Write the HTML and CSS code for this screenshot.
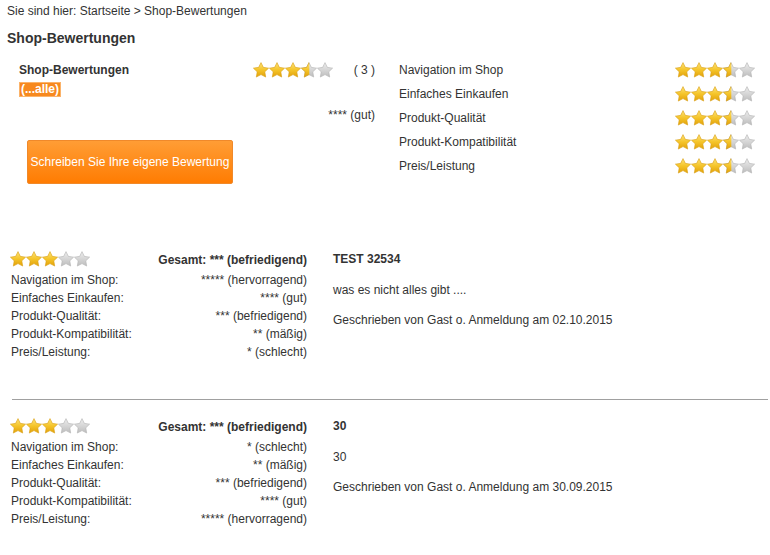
FILE: index.html
```html
<!DOCTYPE html>
<html lang="de">
<head>
<meta charset="utf-8">
<title>Shop-Bewertungen</title>
<link rel="stylesheet" href="styles.css">
</head>
<body>
<svg class="defs" width="0" height="0" aria-hidden="true">
  <defs>
    <linearGradient id="gold" x1="0" y1="0" x2="0" y2="1">
      <stop offset="0" stop-color="#fde37a"/>
      <stop offset="0.5" stop-color="#f5c52a"/>
      <stop offset="1" stop-color="#e2a10a"/>
    </linearGradient>
    <linearGradient id="grey" x1="0" y1="0" x2="0" y2="1">
      <stop offset="0" stop-color="#eeeeee"/>
      <stop offset="1" stop-color="#bdbdbd"/>
    </linearGradient>
    <clipPath id="halfclip"><rect x="0" y="0" width="8.3" height="16"/></clipPath>
    <path id="sp" d="M8 0.6 L10.35 5.36 L15.6 6.13 L11.8 9.84 L12.7 15.07 L8 12.6 L3.3 15.07 L4.2 9.84 L0.4 6.13 L5.65 5.36 Z"/>
    <symbol id="s-on" viewBox="0 0 16 16"><use href="#sp" fill="url(#gold)" stroke="#d9a015" stroke-width="0.6" stroke-linejoin="round"/></symbol>
    <symbol id="s-off" viewBox="0 0 16 16"><use href="#sp" fill="url(#grey)" stroke="#b3b3b3" stroke-width="0.6" stroke-linejoin="round"/></symbol>
    <symbol id="s-half" viewBox="0 0 16 16"><use href="#sp" fill="url(#grey)" stroke="#b3b3b3" stroke-width="0.6" stroke-linejoin="round"/><use href="#sp" clip-path="url(#halfclip)" fill="url(#gold)" stroke="#d9a015" stroke-width="0.6" stroke-linejoin="round"/></symbol>
  </defs>
</svg>

<div class="page">
  <div class="breadcrumb">Sie sind hier: Startseite &gt; Shop-Bewertungen</div>
  <h1 class="title">Shop-Bewertungen</h1>

  <div class="summary">
    <div class="sum-left">
      <div class="sum-head">
        <span class="sum-name">Shop-Bewertungen</span>
        <span class="stars"><svg class="star" viewBox="0 0 16 16"><use href="#s-on"/></svg><svg class="star" viewBox="0 0 16 16"><use href="#s-on"/></svg><svg class="star" viewBox="0 0 16 16"><use href="#s-on"/></svg><svg class="star" viewBox="0 0 16 16"><use href="#s-half"/></svg><svg class="star" viewBox="0 0 16 16"><use href="#s-off"/></svg></span>
        <span class="sum-count">( 3 )</span>
      </div>
      <div><span class="badge">(...alle)</span></div>
      <div class="sum-grade">**** (gut)</div>
      <div><span class="btn">Schreiben Sie Ihre eigene Bewertung</span></div>
    </div>
    <div class="sum-right">
      <div class="crit"><span>Navigation im Shop</span><span class="stars"><svg class="star" viewBox="0 0 16 16"><use href="#s-on"/></svg><svg class="star" viewBox="0 0 16 16"><use href="#s-on"/></svg><svg class="star" viewBox="0 0 16 16"><use href="#s-on"/></svg><svg class="star" viewBox="0 0 16 16"><use href="#s-half"/></svg><svg class="star" viewBox="0 0 16 16"><use href="#s-off"/></svg></span></div>
      <div class="crit"><span>Einfaches Einkaufen</span><span class="stars"><svg class="star" viewBox="0 0 16 16"><use href="#s-on"/></svg><svg class="star" viewBox="0 0 16 16"><use href="#s-on"/></svg><svg class="star" viewBox="0 0 16 16"><use href="#s-on"/></svg><svg class="star" viewBox="0 0 16 16"><use href="#s-half"/></svg><svg class="star" viewBox="0 0 16 16"><use href="#s-off"/></svg></span></div>
      <div class="crit"><span>Produkt-Qualität</span><span class="stars"><svg class="star" viewBox="0 0 16 16"><use href="#s-on"/></svg><svg class="star" viewBox="0 0 16 16"><use href="#s-on"/></svg><svg class="star" viewBox="0 0 16 16"><use href="#s-on"/></svg><svg class="star" viewBox="0 0 16 16"><use href="#s-half"/></svg><svg class="star" viewBox="0 0 16 16"><use href="#s-off"/></svg></span></div>
      <div class="crit"><span>Produkt-Kompatibilität</span><span class="stars"><svg class="star" viewBox="0 0 16 16"><use href="#s-on"/></svg><svg class="star" viewBox="0 0 16 16"><use href="#s-on"/></svg><svg class="star" viewBox="0 0 16 16"><use href="#s-on"/></svg><svg class="star" viewBox="0 0 16 16"><use href="#s-half"/></svg><svg class="star" viewBox="0 0 16 16"><use href="#s-off"/></svg></span></div>
      <div class="crit"><span>Preis/Leistung</span><span class="stars"><svg class="star" viewBox="0 0 16 16"><use href="#s-on"/></svg><svg class="star" viewBox="0 0 16 16"><use href="#s-on"/></svg><svg class="star" viewBox="0 0 16 16"><use href="#s-on"/></svg><svg class="star" viewBox="0 0 16 16"><use href="#s-half"/></svg><svg class="star" viewBox="0 0 16 16"><use href="#s-off"/></svg></span></div>
    </div>
  </div>

  <div class="review review-first">
    <div class="rv-left">
      <div class="rv-head">
        <span class="stars"><svg class="star" viewBox="0 0 16 16"><use href="#s-on"/></svg><svg class="star" viewBox="0 0 16 16"><use href="#s-on"/></svg><svg class="star" viewBox="0 0 16 16"><use href="#s-on"/></svg><svg class="star" viewBox="0 0 16 16"><use href="#s-off"/></svg><svg class="star" viewBox="0 0 16 16"><use href="#s-off"/></svg></span>
        <b>Gesamt: *** (befriedigend)</b>
      </div>
      <div class="rv-row"><span>Navigation im Shop:</span><span>***** (hervorragend)</span></div>
      <div class="rv-row"><span>Einfaches Einkaufen:</span><span>**** (gut)</span></div>
      <div class="rv-row"><span>Produkt-Qualität:</span><span>*** (befriedigend)</span></div>
      <div class="rv-row"><span>Produkt-Kompatibilität:</span><span>** (mäßig)</span></div>
      <div class="rv-row"><span>Preis/Leistung:</span><span>* (schlecht)</span></div>
    </div>
    <div class="rv-right">
      <div class="rv-title">TEST 32534</div>
      <div class="rv-text">was es nicht alles gibt ....</div>
      <div class="rv-text">Geschrieben von Gast o. Anmeldung am 02.10.2015</div>
    </div>
  </div>

  <hr class="sep">

  <div class="review">
    <div class="rv-left">
      <div class="rv-head">
        <span class="stars"><svg class="star" viewBox="0 0 16 16"><use href="#s-on"/></svg><svg class="star" viewBox="0 0 16 16"><use href="#s-on"/></svg><svg class="star" viewBox="0 0 16 16"><use href="#s-on"/></svg><svg class="star" viewBox="0 0 16 16"><use href="#s-off"/></svg><svg class="star" viewBox="0 0 16 16"><use href="#s-off"/></svg></span>
        <b>Gesamt: *** (befriedigend)</b>
      </div>
      <div class="rv-row"><span>Navigation im Shop:</span><span>* (schlecht)</span></div>
      <div class="rv-row"><span>Einfaches Einkaufen:</span><span>** (mäßig)</span></div>
      <div class="rv-row"><span>Produkt-Qualität:</span><span>*** (befriedigend)</span></div>
      <div class="rv-row"><span>Produkt-Kompatibilität:</span><span>**** (gut)</span></div>
      <div class="rv-row"><span>Preis/Leistung:</span><span>***** (hervorragend)</span></div>
    </div>
    <div class="rv-right">
      <div class="rv-title">30</div>
      <div class="rv-text">30</div>
      <div class="rv-text">Geschrieben von Gast o. Anmeldung am 30.09.2015</div>
    </div>
  </div>
</div>
</body>
</html>
```

FILE: styles.css
```css
html, body {
  margin: 0;
  padding: 0;
  background: #ffffff;
}
body {
  font-family: "Liberation Sans", Arial, sans-serif;
  font-size: 12px;
  color: #333333;
}
.defs {
  display: block;
  width: 0;
  height: 0;
  overflow: hidden;
}
.page {
  padding: 3px 2px 0 7px;
}
.breadcrumb {
  line-height: 16px;
}
.title {
  margin: 10px 0 0;
  font-size: 14px;
  font-weight: bold;
  line-height: 18px;
}
.summary {
  display: flex;
  gap: 24px;
  padding-left: 12px;
  margin-top: 11px;
}
.sum-left {
  width: 356px;
}
.sum-head {
  display: flex;
  align-items: center;
  height: 24px;
}
.sum-name {
  flex: 1;
  font-weight: bold;
}
.sum-count {
  margin-left: 21px;
  white-space: nowrap;
}
.stars {
  display: inline-flex;
  align-items: center;
}
.star {
  width: 16px;
  height: 16px;
  display: block;
}
.badge {
  display: inline-block;
  height: 13px;
  line-height: 13px;
  padding: 0 1px;
  background: #f7891f;
  border: 1px solid #fbb36a;
  color: #ffffff;
  font-weight: bold;
}
.sum-grade {
  margin-top: 9px;
  line-height: 18px;
  text-align: right;
}
.btn {
  display: inline-flex;
  align-items: center;
  justify-content: center;
  box-sizing: border-box;
  width: 206px;
  height: 44px;
  margin: 16px 0 0 8px;
  background: linear-gradient(#ff9d35, #ff7c02);
  border: 1px solid #f0892a;
  border-radius: 2px;
  color: #ffffff;
  font-size: 12px;
}
.sum-right {
  width: 356px;
}
.crit {
  display: flex;
  justify-content: space-between;
  align-items: center;
  height: 24px;
}
.review {
  display: grid;
  grid-template-columns: 297px 1fr;
  column-gap: 26px;
  padding-left: 3px;
}
.review-first {
  margin-top: 65px;
}
.rv-head {
  display: flex;
  justify-content: space-between;
  align-items: center;
  height: 20px;
  margin-bottom: 2px;
}
.rv-head b {
  margin-top: 1px;
}
.rv-row {
  display: flex;
  justify-content: space-between;
  height: 18px;
  line-height: 18px;
  padding-left: 1px;
}
.rv-title {
  font-weight: bold;
  line-height: 20px;
}
.rv-text {
  line-height: 18px;
  margin-top: 12px;
}
.sep {
  margin: 38px 0 16px 5px;
  border: 0;
  border-top: 1px solid #a0a0a0;
  height: 0;
}
```
